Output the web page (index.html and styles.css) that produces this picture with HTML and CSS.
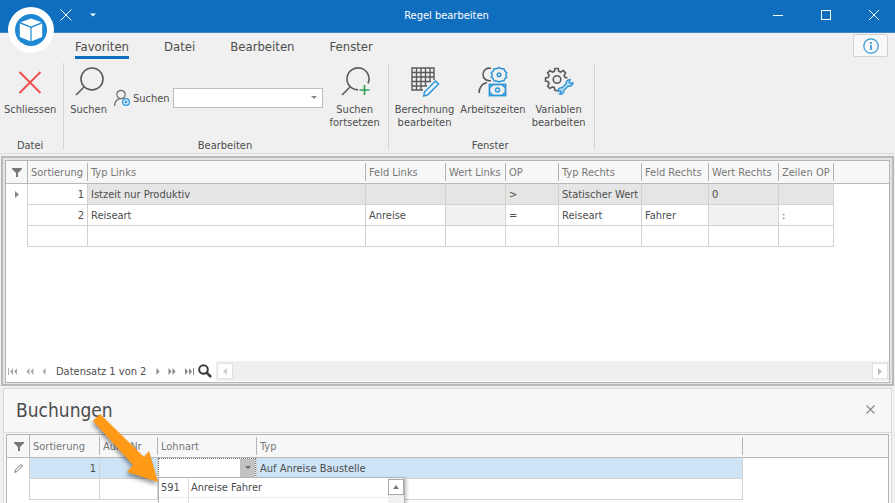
FILE: index.html
```
<!DOCTYPE html>
<html lang="de">
<head>
    <meta charset="UTF-8">
    <meta name="viewport" content="width=device-width, initial-scale=1.0">
    <title>Regel bearbeiten</title>
    <link rel="stylesheet" href="styles.css">
</head>
<body>
    <header class="titlebar">
        <div class="quick-access">
            <button class="title-button" aria-label="Schliessen">
                <svg width="12" height="12" viewBox="0 0 12 12"><path d="M.5.5l11 11M11.5.5l-11 11" stroke="#fff" fill="none"/></svg>
            </button>
            <button class="title-button" aria-label="Schnellzugriff anpassen">
                <svg width="6" height="4" viewBox="0 0 6 4"><path d="M0 .5h6l-3 3z" fill="#fff"/></svg>
            </button>
        </div>
        <h1 class="window-title">Regel bearbeiten</h1>
        <div class="window-buttons">
            <button class="title-button" aria-label="Minimieren">
                <svg width="10" height="10" viewBox="0 0 10 10"><path d="M0 5.5h10" stroke="#fff"/></svg>
            </button>
            <button class="title-button" aria-label="Maximieren">
                <svg width="10" height="10" viewBox="0 0 10 10"><rect x=".5" y=".5" width="9" height="9" stroke="#fff" fill="none"/></svg>
            </button>
            <button class="title-button" aria-label="Fenster schliessen">
                <svg width="10" height="10" viewBox="0 0 10 10"><path d="M0 0l10 10M10 0L0 10" stroke="#fff"/></svg>
            </button>
        </div>
    </header>

    <button class="app-button" aria-label="Anwendungsmenü">
        <svg width="46" height="46" viewBox="0 0 46 46">
            <circle cx="23" cy="23" r="23" fill="#fff"/>
            <circle cx="23" cy="23" r="16" fill="#1e88d2"/>
            <path d="M23 11.500l10.500 3.800L23 19.500l-10.500-4.200z" fill="#fff"/>
            <path d="M11.800 16.500l10.600 4.200v13.500l-10.600-4.200zM34.200 16.500l-10.600 4.200v13.500l10.600-4.200z" fill="#fff"/>
        </svg>
    </button>

    <nav class="tabs">
        <button class="tab active">Favoriten</button>
        <button class="tab">Datei</button>
        <button class="tab">Bearbeiten</button>
        <button class="tab">Fenster</button>
        <button class="info-button" aria-label="Info">
            <svg width="16" height="16" viewBox="0 0 16 16"><circle cx="8" cy="8" r="7.200" fill="none" stroke="#2e96d8" stroke-width="1.200"/><path d="M8 4v2M8 7v5" stroke="#2e96d8" stroke-width="1.600"/></svg>
        </button>
    </nav>

    <section class="ribbon">
        <div class="group group-file">
            <div class="group-items">
                <button class="tool">
                    <svg width="32" height="32" viewBox="0 0 32 32"><path d="M5.500 6l21 21M26.500 6l-21 21" stroke="#f04a4a" stroke-width="1.800" fill="none"/></svg>
                    <span>Schliessen</span>
                </button>
            </div>
            <div class="caption">Datei</div>
        </div>
        <div class="group group-edit">
            <div class="group-items">
                <button class="tool">
                    <svg width="32" height="32" viewBox="0 0 32 32"><g fill="none" stroke="#5a5a5a" stroke-width="1.600"><circle cx="19" cy="13" r="11"/><path d="M11 21l-8 8"/></g></svg>
                    <span>Suchen</span>
                </button>
                <div class="search">
                    <svg width="16" height="18" viewBox="0 0 16 18"><g fill="none" stroke="#6a6a6a" stroke-width="1.200"><circle cx="7" cy="5.500" r="4.200"/><path d="M.600 17c0-4 1.900-6.500 5-7.200"/></g><circle cx="12" cy="13" r="3.400" fill="#d3e8f6" stroke="#2e96d8" stroke-width="1.200"/><circle cx="12" cy="13" r="1.200" fill="#2e96d8"/></svg>
                    <label for="search">Suchen</label>
                    <select id="search" class="search-select"><option></option></select>
                </div>
                <button class="tool tool-next">
                    <svg width="32" height="32" viewBox="0 0 32 32"><g fill="none" stroke="#5a5a5a" stroke-width="1.600"><path d="M19 23.900A11 11 0 1 1 29 17.500"/><path d="M11 21l-8 8"/></g><path d="M25.500 19v10M20.500 24h10" stroke="#2f9e55" stroke-width="1.600"/></svg>
                    <span>Suchen<br>fortsetzen</span>
                </button>
            </div>
            <div class="caption">Bearbeiten</div>
        </div>
        <div class="group group-window">
            <div class="group-items">
                <button class="tool">
                    <svg width="32" height="32" viewBox="0 0 32 32"><path d="M14 24H3V2h22v12M3 6.500h22M3 11h22M3 15.500h19M3 20h15M7.500 2v22M12 2v22M16.500 2v18M21 2v14" fill="none" stroke="#5a5a5a" stroke-width="1.400"/><path d="M26.500 15l3 3-11 11-3.800 1 .8-4z" fill="#eaf4fb" stroke="#2e96d8" stroke-width="1.500"/></svg>
                    <span>Berechnung<br>bearbeiten</span>
                </button>
                <button class="tool">
                    <svg width="32" height="32" viewBox="0 0 32 32"><g fill="none" stroke="#5a5a5a" stroke-width="1.600"><path d="M14 2.400A6.300 6.300 0 1 0 14 14.500"/><path d="M2 27c.3-6 3-9.500 8-10.500"/></g><g fill="none" stroke="#2e96d8"><path d="M22 1.500l2.300 1.200 2.600 0 .9 2.400 1.900 1.700-.9 2.200.9 2.200-1.900 1.500-.9 2.300-2.600 0L22 16l-2.300-1-2.600 0-.9-2.300-1.900-1.500.9-2.200-.9-2.200 1.900-1.700.9-2.400 2.600 0z" stroke-width="1.500"/><circle cx="22" cy="8.800" r="1.800" stroke-width="1.500"/><rect x="12.500" y="18.500" width="16" height="11" stroke-width="1.800"/><circle cx="20.500" cy="24" r="2" stroke-width="1.500"/><path d="M13 21.500l3-3M13 26.500l3 3M28 21.500l-3-3M28 26.500l-3 3" stroke-width="1.500"/></g></svg>
                    <span>Arbeitszeiten</span>
                </button>
                <button class="tool">
                    <svg width="32" height="32" viewBox="0 0 32 32"><g fill="none" stroke="#5a5a5a" stroke-width="1.600"><circle cx="14" cy="13.500" r="3.800"/><path d="M14.500 24.500h-2.500l-.6-2.800-2-.8-2.500 1.600-2.300-2.400 1.500-2.400-.8-2-2.800-.6v-3.200l2.800-.6.800-2-1.500-2.400 2.300-2.300 2.500 1.500 2-.8.600-2.800h3.200l.6 2.800 2 .8 2.500-1.500 2.300 2.300-1.500 2.400.8 2 2.500.6"/></g><path d="M15 25.500a3.300 3.300 0 0 1 4-3.800l4.200-4a3.500 3.500 0 0 1 4-4l-1.200 2.500 1.500 1.500 2.300-1.200a3.500 3.500 0 0 1-4.600 3.600l-4.200 4.200a3.300 3.300 0 0 1-4.600 3.600l1.900-2-1.300-1.300z" fill="#b9dcf3" stroke="#2e96d8" stroke-width="1.400"/></svg>
                    <span>Variablen<br>bearbeiten</span>
                </button>
            </div>
            <div class="caption">Fenster</div>
        </div>
    </section>

    <main>
        <section class="rules">
            <div class="rules-grid">
                <table class="grid">
                    <colgroup>
                        <col class="w-mark"><col class="w-sort"><col class="w-type-left"><col class="w-field-left"><col class="w-value-left"><col class="w-op"><col class="w-type-right"><col class="w-field-right"><col class="w-value-right"><col class="w-row-op"><col>
                    </colgroup>
                    <thead>
                        <tr>
                            <th class="mark"><svg width="10" height="9" viewBox="0 0 10 9"><path d="M0 0h10v1L6 5v4H4V5L0 1z" fill="#777"/></svg></th>
                            <th>Sortierung</th><th>Typ Links</th><th>Feld Links</th><th>Wert Links</th><th>OP</th><th>Typ Rechts</th><th>Feld Rechts</th><th>Wert Rechts</th><th>Zeilen OP</th><th class="rest"></th>
                        </tr>
                    </thead>
                    <tbody>
                        <tr class="focused">
                            <td class="mark"><svg width="4" height="7" viewBox="0 0 4 7"><path d="M0 0l4 3.500L0 7z" fill="#888"/></svg></td>
                            <td class="number">1</td><td>Istzeit nur Produktiv</td><td></td><td></td><td>&gt;</td><td>Statischer Wert</td><td></td><td>0</td><td></td><td class="rest"></td>
                        </tr>
                        <tr>
                            <td class="mark"></td>
                            <td class="number">2</td><td>Reiseart</td><td>Anreise</td><td class="locked"></td><td>=</td><td>Reiseart</td><td>Fahrer</td><td class="locked"></td><td>:</td><td class="rest"></td>
                        </tr>
                        <tr>
                            <td class="mark"></td>
                            <td></td><td></td><td></td><td></td><td></td><td></td><td></td><td></td><td></td><td class="rest"></td>
                        </tr>
                    </tbody>
                </table>
                <div class="navigator">
                    <button aria-label="Erster Datensatz"><svg width="10" height="7" viewBox="0 0 10 7"><path d="M0 0h1v7H0zM5 0v7L2 3.500zM9 0v7L6 3.500z" fill="#aaa"/></svg></button>
                    <button aria-label="Vorherige Seite"><svg width="8" height="7" viewBox="0 0 8 7"><path d="M3.500 0v7l-3-3.500zM7.500 0v7l-3-3.500z" fill="#aaa"/></svg></button>
                    <button aria-label="Vorheriger Datensatz"><svg width="4" height="7" viewBox="0 0 4 7"><path d="M3.500 0v7l-3-3.500z" fill="#aaa"/></svg></button>
                    <span class="record">Datensatz 1 von 2</span>
                    <button aria-label="Nächster Datensatz"><svg width="4" height="7" viewBox="0 0 4 7"><path d="M.500 0v7l3-3.500z" fill="#888"/></svg></button>
                    <button aria-label="Nächste Seite"><svg width="8" height="7" viewBox="0 0 8 7"><path d="M.500 0v7l3-3.500zM4.500 0v7l3-3.500z" fill="#888"/></svg></button>
                    <button aria-label="Letzter Datensatz"><svg width="10" height="7" viewBox="0 0 10 7"><path d="M1 0v7l3-3.500zM5 0v7l3-3.500zM9 0h1v7H9z" fill="#888"/></svg></button>
                    <button class="find" aria-label="Suchen"><svg width="14" height="14" viewBox="0 0 14 14"><circle cx="5.500" cy="5.500" r="4.300" fill="none" stroke="#3c3c3c" stroke-width="2"/><path d="M8.700 8.700L13 13" stroke="#3c3c3c" stroke-width="2.600"/></svg></button>
                    <div class="scrollbar">
                        <button class="scroll-button" aria-label="Nach links"><svg width="4" height="7" viewBox="0 0 4 7"><path d="M4 0v7L0 3.500z" fill="#ccc"/></svg></button>
                        <button class="scroll-button" aria-label="Nach rechts"><svg width="4" height="7" viewBox="0 0 4 7"><path d="M0 0v7l4-3.500z" fill="#bbb"/></svg></button>
                    </div>
                </div>
            </div>
        </section>

        <section class="bookings">
            <div class="bookings-head">
                <h2>Buchungen</h2>
                <button aria-label="Buchungen schliessen"><svg width="9" height="9" viewBox="0 0 9 9"><path d="M.500.500l8 8M8.500.500l-8 8" stroke="#8a8a8a" stroke-width="1.200"/></svg></button>
            </div>
            <div class="bookings-grid">
                <table class="grid">
                    <colgroup>
                        <col class="w-mark-edit"><col class="w-sort-edit"><col class="w-order"><col class="w-wage"><col class="w-type"><col>
                    </colgroup>
                    <thead>
                        <tr>
                            <th class="mark"><svg width="10" height="9" viewBox="0 0 10 9"><path d="M0 0h10v1L6 5v4H4V5L0 1z" fill="#777"/></svg></th>
                            <th>Sortierung</th><th>Auftr-Nr</th><th>Lohnart</th><th>Typ</th><th class="rest"></th>
                        </tr>
                    </thead>
                    <tbody>
                        <tr class="editing">
                            <td class="mark"><svg width="9" height="9" viewBox="0 0 9 9"><path d="M.700 8.300l.6-2.200L6.300 1.100a1 1 0 0 1 1.500 1.500L2.900 7.700z" fill="none" stroke="#777"/></svg></td>
                            <td class="number">1</td><td></td>
                            <td class="editor">
                                <select class="wage-select" aria-label="Lohnart"><option></option></select>
                                <div class="popup">
                                    <table class="choices">
                                        <tr><td class="code">591</td><td>Anreise Fahrer</td></tr>
                                        <tr><td class="code"></td><td>Anreise Beifahrer</td></tr>
                                    </table>
                                    <div class="popup-scroll">
                                        <button class="scroll-button up" aria-label="Nach oben"><svg width="6" height="4" viewBox="0 0 6 4"><path d="M0 4h6L3 0z" fill="#777"/></svg></button>
                                    </div>
                                </div>
                            </td>
                            <td>Auf Anreise Baustelle</td><td class="rest"></td>
                        </tr>
                        <tr>
                            <td class="mark"></td>
                            <td></td><td></td><td></td><td></td><td class="rest"></td>
                        </tr>
                    </tbody>
                </table>
                <svg class="pointer" width="76" height="80" viewBox="0 0 76 80"><path d="M15 3L59 46l5-6 9 31-31-10 6-7L8 10z" fill="#ff9a17"/></svg>
            </div>
        </section>
    </main>
</body>
</html>
```
FILE: styles.css
```
/* General Styles */
* {
    box-sizing: border-box;
}

body {
    margin: 0;
    height: 100vh;
    overflow: hidden;
    display: flex;
    flex-direction: column;
    position: relative;
    background-color: #f0f0f0;
    color: #4d4d4d;
    font-family: 'DejaVu Sans Condensed', 'Noto Sans', sans-serif;
    font-size: 11px;
    line-height: 13px;
}

button {
    border: 0;
    padding: 0;
    background: none;
    color: inherit;
    font: inherit;
    display: flex;
    align-items: center;
    justify-content: center;
}

svg {
    display: block;
    flex: none;
}

select {
    appearance: none;
    border: 1px solid #bdbdbd;
    border-radius: 0;
    padding: 0;
    background-color: #fff;
    font: inherit;
}

/* Title bar */
.titlebar {
    display: grid;
    grid-template-columns: 1fr auto 1fr;
    align-items: center;
    height: 33px;
    flex: none;
    background-color: #106ebe;
    border-bottom: 1px solid #3c86c8;
    color: #fff;
}

.quick-access {
    display: flex;
    gap: 14px;
    padding: 0 0 2px 56px;
}

.title-button {
    width: 20px;
    height: 20px;
}

.quick-access .title-button:last-child {
    width: 6px;
}

.window-title {
    margin: 0;
    padding: 0 2px 2px 0;
    font-size: 11px;
    font-weight: normal;
}

.window-buttons {
    display: flex;
    justify-content: flex-end;
    gap: 28px;
    padding: 0 11px 2px 0;
}

.app-button {
    position: absolute;
    left: 8px;
    top: 7px;
    border-radius: 50%;
}

/* Ribbon tabs */
.tabs {
    display: flex;
    align-items: flex-start;
    gap: 35px;
    height: 30px;
    flex: none;
    padding: 1px 7px 0 75px;
}

.tab {
    height: 25px;
    padding-top: 3px;
    border-bottom: 3px solid transparent;
    font-size: 13px;
}

.tab.active {
    border-bottom-color: #106ebe;
}

.info-button {
    width: 35px;
    height: 23px;
    margin-left: auto;
    border: 1px solid #d2d2d2;
    border-radius: 2px;
    background-color: #f8f8f8;
}

/* Ribbon */
.ribbon {
    display: flex;
    height: 90px;
    flex: none;
    padding-bottom: 3px;
}

.group {
    display: flex;
    flex-direction: column;
    justify-content: space-between;
    border-right: 1px solid #d4d4d4;
}

.group-items {
    display: flex;
    padding-top: 3px;
}

.group-file {
    padding: 0 7px 0 4px;
}

.group-edit {
    padding: 0 8px 0 6px;
}

.group-window {
    padding: 0 8px 0 6px;
}

.group-window .group-items {
    gap: 6px;
}

.tool {
    flex-direction: column;
    justify-content: flex-start;
    gap: 5px;
    white-space: nowrap;
}

.tool-next {
    margin-left: 7px;
}

.caption {
    text-align: center;
    line-height: 8px;
}

.search {
    display: flex;
    align-items: center;
    align-self: flex-start;
    gap: 3px;
    margin: 22px 0 0 7px;
}

.search-select {
    width: 150px;
    height: 20px;
    background: #fff url("data:image/svg+xml,%3Csvg xmlns='http://www.w3.org/2000/svg' width='6' height='4'%3E%3Cpath d='M0 0h6L3 3z' fill='%23888'/%3E%3C/svg%3E") no-repeat right 5px center;
}

/* Panels */
main {
    display: flex;
    flex-direction: column;
    flex: 1;
    min-height: 0;
    border-top: 1px solid #dcdcdc;
    padding: 2px 1px 0;
}

.rules {
    display: flex;
    flex: 1;
    min-height: 0;
    border: 2px solid #bababa;
    padding: 2px 2px 1px;
    background-color: #e4e4e4;
}

.rules-grid {
    display: flex;
    flex-direction: column;
    justify-content: space-between;
    flex: 1;
    border: 1px solid #b4b4b4;
    background-color: #fff;
}

.bookings {
    margin: 2px 2px 0;
    border: 1px solid #dadada;
    border-bottom: 0;
    background-color: #f7f7f7;
}

.bookings-head {
    display: flex;
    align-items: center;
    justify-content: space-between;
    height: 44px;
    padding: 0 16px 2px 12px;
    border-bottom: 1px solid #dadada;
}

.bookings-head h2 {
    margin: 0;
    font-size: 19px;
    line-height: 24px;
    font-weight: normal;
}

.bookings-grid {
    position: relative;
    margin: 1px 2px 0;
    padding-bottom: 3px;
    border: 1px solid #b4b4b4;
    border-bottom: 0;
    background-color: #fff;
}

/* Grids */
.grid {
    width: 100%;
    table-layout: fixed;
    border-collapse: separate;
    border-spacing: 0;
}

.grid th {
    height: 23px;
    padding: 0 3px;
    border-bottom: 1px solid #b9b9b9;
    background: #f7f7f7 linear-gradient(#b4b4b4, #b4b4b4) no-repeat right center / 1px 18px;
    color: #777;
    font-weight: normal;
    text-align: left;
    white-space: nowrap;
}

.grid th.mark {
    background-size: 1px 100%;
}

.grid th.rest {
    background-image: none;
}

.grid > tbody > tr > td {
    height: 21px;
    padding: 0 3px;
    border-right: 1px solid #d2d2d2;
    border-bottom: 1px solid #d2d2d2;
    white-space: nowrap;
}

.grid > tbody > tr > td.mark {
    border-bottom: 0;
}

.grid > tbody > tr > td.rest {
    border: 0;
}

.grid .mark svg {
    margin: 0 auto;
}

.grid .number {
    text-align: right;
}

.focused td:not(.mark, .number, .rest) {
    background-color: #e5e5e5;
}

.locked {
    background-color: #f1f1f1;
}

.editing > td:not(.mark, .editor, .rest) {
    background-color: #cde4f7;
}

.w-mark { width: 22px; }
.w-sort { width: 60px; }
.w-type-left { width: 278px; }
.w-field-left { width: 80px; }
.w-value-left { width: 60px; }
.w-op { width: 53px; }
.w-type-right { width: 83px; }
.w-field-right { width: 67px; }
.w-value-right { width: 70px; }
.w-row-op { width: 55px; }

.w-mark-edit { width: 23px; }
.w-sort-edit { width: 70px; }
.w-order { width: 58px; }
.w-wage { width: 99px; }
.w-type { width: 486px; }

/* Record navigator */
.navigator {
    display: flex;
    align-items: center;
    height: 22px;
    padding-left: 2px;
    gap: 8px;
}

.navigator .record {
    padding: 0 2px;
}

.navigator .find {
    margin-left: -4px;
}

.scrollbar {
    display: flex;
    justify-content: space-between;
    flex: 1;
    margin-left: -4px;
    padding: 2px 1px;
    background-color: #efefef;
}

.scroll-button {
    width: 16px;
    height: 16px;
    border: 1px solid #e2e2e2;
    background-color: #fff;
}

/* Wage type editor */
.grid > tbody > tr > td.editor {
    position: relative;
    padding: 0;
}

.wage-select {
    display: block;
    width: 100%;
    height: 20px;
    border: 1px dotted #777;
    background: url("data:image/svg+xml,%3Csvg xmlns='http://www.w3.org/2000/svg' width='6' height='4'%3E%3Cpath d='M0 0h6L3 3z' fill='%23666'/%3E%3C/svg%3E") no-repeat right 4px center, linear-gradient(#c2c2c2, #c2c2c2) no-repeat right / 15px 100%, #fff;
}

.popup {
    position: absolute;
    left: 0;
    top: 19px;
    z-index: 1;
    display: flex;
    width: 247px;
    border: 1px solid #b4b4b4;
    background-color: #fff;
    box-shadow: 2px 2px 3px rgba(0, 0, 0, .2);
}

.choices {
    flex: 1;
    border-collapse: separate;
    border-spacing: 0;
}

.choices td {
    height: 20px;
    padding: 0 2px;
    border-bottom: 1px solid #ececec;
}

.choices .code {
    width: 30px;
    border-right: 1px solid #dcdcdc;
}

.popup-scroll {
    padding-top: 1px;
    background-color: #f0f0f0;
}

.scroll-button.up {
    border-color: #a8a8a8;
}

.pointer {
    position: absolute;
    left: 78px;
    top: -24px;
    z-index: 2;
    filter: drop-shadow(-1px 3px 2px rgba(0, 0, 0, .4));
}
```
